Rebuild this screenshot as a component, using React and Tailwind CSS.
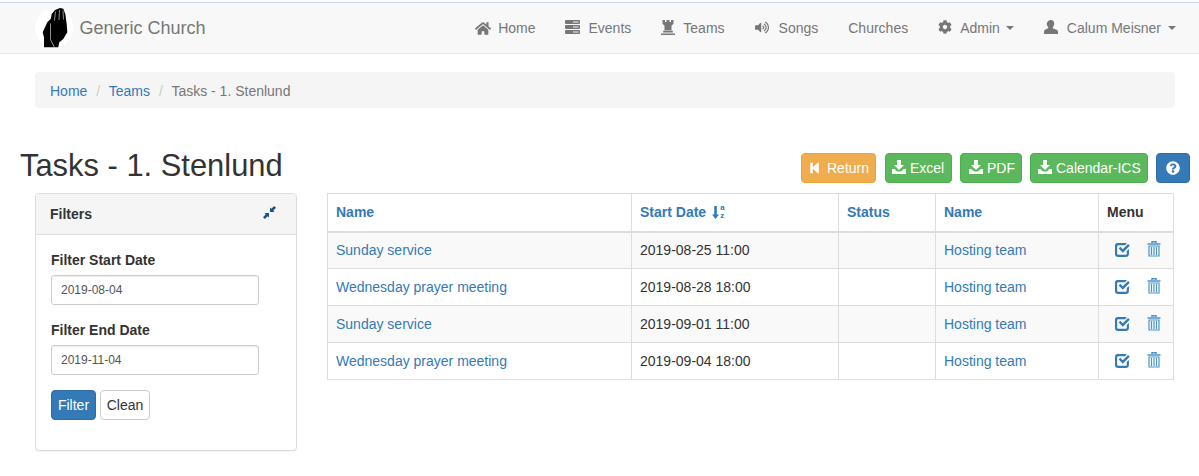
import React from "react";
import { FaHome, FaCog, FaVolumeUp, FaQuestionCircle } from "react-icons/fa";

const Tasks = (p) => (
  <svg viewBox="0 0 15 14" {...p} fill="currentColor">
    <rect x="0" y="0" width="15" height="4" rx="1" />
    <rect x="0" y="5" width="15" height="4" rx="1" />
    <rect x="0" y="10" width="15" height="4" rx="1" />
    <path d="M8 1.500h5.500v1H8zM8 6.500h5.500v1H8zM8 11.500h5.500v1H8z" fill="#f8f8f8" />
  </svg>
);
const Tower = (p) => (
  <svg viewBox="0 0 14 15" {...p} fill="currentColor">
    <path d="M1.500 0h2.500v2h1.500V0h3v2H10V0h2.500v4l-2 1.500V10H3.500V5.500l-2-1.500z" />
    <path d="M2.500 10.500h9L12 12.500H2zM0 13.500h14V15H0z" />
  </svg>
);
const User = (p) => (
  <svg viewBox="0 0 14 14" {...p} fill="currentColor">
    <path d="M7 0c2 0 3.200 1.500 3.200 3.600 0 1.600-.7 3.200-1.600 4 .1.800.7 1 2 1.500C12.800 9.700 14 10.300 14 12v2H0v-2c0-1.700 1.200-2.300 2.400-2.900 1.300-.5 1.900-.7 2-1.500-.9-.8-1.600-2.400-1.600-4C2.800 1.500 5 0 7 0z" />
  </svg>
);
const Back = (p) => (
  <svg viewBox="0 0 10 14" {...p} fill="currentColor">
    <path d="M0 1h3v5.200L9 1h1v12H9L3 7.800V13H0z" />
  </svg>
);
const Save = (p) => (
  <svg viewBox="0 0 14 14" {...p} fill="currentColor">
    <path d="M5 0h4v5h3L7 10 2 5h3zM0 9h2.500L5 11.500h4L11.500 9H14v5H0z" />
  </svg>
);
const Compress = (p) => (
  <svg viewBox="0 0 14 14" {...p} fill="currentColor">
    <path d="M12 0L14 2 11 5l1.500 1.500H7.500V1.500L9 3zM2 14L0 12 3 9 1.500 7.500H6.500V12.500L5 11z" />
  </svg>
);
const Check = (p) => (
  <svg viewBox="0 0 14 14" {...p} fill="currentColor">
    <path d="M2.500 1H11L9.500 3H3a1 1 0 0 0-1 1v7a1 1 0 0 0 1 1h7a1 1 0 0 0 1-1V8.500l2-2V11a3 3 0 0 1-3 3H3a3 3 0 0 1-3-3V3.500A2.500 2.500 0 0 1 2.500 1z" />
    <path d="M3.500 6l1.500-1.500 2.200 2.300L12.200 1.800 13.800 3.400 7.200 10z" />
  </svg>
);
const Trash = (p) => (
  <svg viewBox="0 0 14 16" {...p} fill="none" stroke="currentColor">
    <path d="M5 2V.7h4V2M.5 3h13" strokeWidth="1.500" />
    <path d="M2 5h10v10H2z" strokeWidth="1.200" />
    <path d="M4.500 6v8M7 6v8M9.500 6v8" strokeWidth="1.200" />
  </svg>
);
const Logo = () => (
  <svg viewBox="0 0 38 40" className="w-[38px] h-[40px] shrink-0">
    <ellipse cx="19" cy="20" rx="19" ry="20" fill="#fff" />
    <path d="M9 39.300V29.300L7.700 24.300 12.300 14.300 15.700 11 16.700 6 20 2 25 0 28.300.7 30.300 6 31.700 16 32.300 24.300 28.300 31 24.300 34.300 23.300 39.300z" fill="#000" />
    <path d="M15.500 15.500v16l4 8M20.500 3.500l-1 9M24.500 2l-.5 10M28 2.500l.5 9" stroke="#ccc" strokeWidth=".7" fill="none" />
  </svg>
);

function NavItem({ icon, label, caret, gap = "gap-[8px]", cls = "" }) {
  return (
    <a className={`flex items-center ${gap} px-[15px] text-[#777] text-[14px] ${cls}`}>
      {icon}
      <span>{label}</span>
      {caret && <span className="ml-[-2px] w-0 h-0 border-x-4 border-x-transparent border-t-4 border-t-[#777]" />}
    </a>
  );
}

function Btn({ cls, icon, label, gap = "gap-[4px]" }) {
  return (
    <a className={`flex items-center ${gap} h-[30px] rounded-[4px] border text-white text-[14px] ${cls}`}>
      {icon}
      {label && <span>{label}</span>}
    </a>
  );
}

const rows = [
  ["Sunday service", "2019-08-25 11:00"],
  ["Wednesday prayer meeting", "2019-08-28 18:00"],
  ["Sunday service", "2019-09-01 11:00"],
  ["Wednesday prayer meeting", "2019-09-04 18:00"],
];

const green = "bg-[#5cb85c] border-[#4cae4c]";

function Field({ label, value }) {
  return (
    <div className="mb-[15px]">
      <div className="text-[14px] font-bold text-[#333] leading-[20px] mb-[5px]">{label}</div>
      <input
        readOnly
        value={value}
        className="block w-[208px] h-[30px] px-[9px] text-[12px] text-[#555] bg-white border border-[#ccc] rounded-[3px] shadow-[inset_0_1px_1px_rgba(0,0,0,0.075)] outline-none"
      />
    </div>
  );
}

export default function App() {
  return (
    <div className="bg-white text-[#333] text-[14px] leading-[20px] h-[476px] overflow-hidden font-['Liberation_Sans',Arial,sans-serif]">
      <div className="h-[2px]" />
      <nav className="h-[52px] bg-[#f8f8f8] border-t border-t-[#c9d5ee] border-b border-b-[#e7e7e7] flex items-center justify-between pl-[35px] pr-[8px]">
        <div className="flex items-center gap-[7px]">
          <Logo />
          <span className="text-[18px] text-[#777] ml-[-0.5px]">Generic Church</span>
        </div>
        <div className="flex items-center">
          <NavItem icon={<FaHome className="w-[16px] h-[15px]" />} label="Home" gap="gap-[7px]" />
          <NavItem icon={<Tasks className="w-[15px] h-[14px] mb-[3px]" />} label="Events" gap="gap-[9px]" cls="ml-[-1px]" />
          <NavItem icon={<Tower className="w-[14px] h-[15px] mb-[2px]" />} label="Teams" gap="gap-[8px]" />
          <NavItem icon={<FaVolumeUp className="w-[14px] h-[13px] mb-[1px]" />} label="Songs" gap="gap-[10px]" />
          <NavItem label="Churches" />
          <NavItem icon={<FaCog className="w-[14px] h-[14px] mb-[2px]" />} label="Admin" caret />
          <NavItem icon={<User className="w-[14px] h-[14px] mb-[2px]" />} label="Calum Meisner" caret gap="gap-[9px]" />
        </div>
      </nav>

      <div className="ml-[35px] mr-[24px] mt-[18px] h-[36px] pt-[2px] rounded-[4px] bg-[#f5f5f5] flex items-center px-[15px] text-[14px]">
        <a className="text-[#337ab7]">Home</a>
        <span className="text-[#ccc] pl-[9px] pr-[8.500px]">/</span>
        <a className="text-[#337ab7]">Teams</a>
        <span className="text-[#ccc] pl-[9px] pr-[8.500px]">/</span>
        <span className="text-[#777]">Tasks - 1. Stenlund</span>
      </div>

      <div className="flex items-center justify-between pl-[20px] pr-[9px] mt-[39px] h-[40px]">
        <h1 className="text-[30.900px] leading-[40px] text-[#333] font-normal mb-[2px]">Tasks - 1. Stenlund</h1>
        <div className="flex items-center gap-[8px] mt-[2px]">
          <Btn cls="bg-[#f0ad4e] border-[#eea236] pl-[8px] w-[75px]" gap="gap-[8px]" icon={<Back className="w-[9px] h-[12px]" />} label="Return" />
          <Btn cls={`${green} pl-[6px] w-[67px] ml-[1px]`} icon={<Save className="w-[14px] h-[14px] mb-[2px]" />} label="Excel" />
          <Btn cls={`${green} pl-[8px] w-[62px]`} icon={<Save className="w-[14px] h-[14px] mb-[2px]" />} label="PDF" />
          <Btn cls={`${green} pl-[7px] w-[118px]`} icon={<Save className="w-[14px] h-[14px] mb-[2px]" />} label="Calendar-ICS" />
          <Btn cls="bg-[#337ab7] border-[#2e6da4] w-[34px] justify-center" icon={<FaQuestionCircle className="w-[14px] h-[14px]" />} />
        </div>
      </div>

      <div className="flex items-start pl-[35px] pr-[25px] mt-[6px]">
        <aside className="w-[262px] h-[258px] shrink-0 border border-[#ddd] rounded-[4px] bg-white shadow-[0_1px_1px_rgba(0,0,0,0.05)]">
          <div className="h-[41px] bg-[#f5f5f5] border-b border-[#ddd] rounded-t-[3px] flex items-center justify-between pl-[14px] pr-[20px] font-bold">
            <span>Filters</span>
            <Compress className="w-[13px] h-[13px] text-[#23527c] mb-[3px]" />
          </div>
          <div className="pl-[15px] pt-[15px]">
            <Field label="Filter Start Date" value="2019-08-04" />
            <Field label="Filter End Date" value="2019-11-04" />
            <div className="flex gap-[4px]">
              <a className="h-[30px] w-[45px] flex items-center justify-center rounded-[4px] bg-[#337ab7] border border-[#2e6da4] text-white">Filter</a>
              <a className="h-[30px] w-[50px] flex items-center justify-center rounded-[4px] bg-white border border-[#ccc] text-[#333]">Clean</a>
            </div>
          </div>
        </aside>

        <table className="ml-[30px] w-[846px] table-fixed border-collapse border border-[#ddd] text-[14px]">
          <colgroup>
            <col className="w-[304px]" />
            <col className="w-[207px]" />
            <col className="w-[97px]" />
            <col className="w-[163px]" />
            <col className="w-[75px]" />
          </colgroup>
          <thead>
            <tr className="h-[38px] border-b-2 border-b-[#ddd]">
              <th className="border border-[#ddd] border-b-2 px-[8px] text-left text-[#337ab7] font-bold">Name</th>
              <th className="border border-[#ddd] border-b-2 px-[8px] text-left text-[#337ab7] font-bold">
                <span className="flex items-center gap-[6px]">
                  Start Date
                  <span className="flex items-center">
                    <svg viewBox="0 0 7 13" className="w-[7px] h-[13px]" fill="currentColor">
                      <path d="M2.200 0h2.600v8.500H7L3.500 13 0 8.500h2.200z" />
                    </svg>
                    <span className="flex flex-col ml-[1px] text-[8px] leading-[8px] font-bold">
                      <span>a</span>
                      <span>z</span>
                    </span>
                  </span>
                </span>
              </th>
              <th className="border border-[#ddd] border-b-2 px-[8px] text-left text-[#337ab7] font-bold">Status</th>
              <th className="border border-[#ddd] border-b-2 px-[8px] text-left text-[#337ab7] font-bold">Name</th>
              <th className="border border-[#ddd] border-b-2 px-[8px] text-left text-[#333] font-bold">Menu</th>
            </tr>
          </thead>
          <tbody>
            {rows.map(([name, date], i) => (
              <tr key={i} className={`h-[37px] ${i % 2 === 0 ? "bg-[#f9f9f9]" : "bg-white"}`}>
                <td className="border border-[#ddd] px-[8px] text-[#337ab7]">{name}</td>
                <td className="border border-[#ddd] px-[8px] text-[#333]">{date}</td>
                <td className="border border-[#ddd] px-[8px]"></td>
                <td className="border border-[#ddd] px-[8px] text-[#337ab7]">Hosting team</td>
                <td className="border border-[#ddd] pl-[16px] pr-0">
                  <span className="flex items-center gap-[17px] mb-[2px]">
                    <Check className="w-[15px] h-[15px] text-[#337ab7]" />
                    <Trash className="w-[14px] h-[16px] text-[#4b94cc]" />
                  </span>
                </td>
              </tr>
            ))}
          </tbody>
        </table>
      </div>
    </div>
  );
}
